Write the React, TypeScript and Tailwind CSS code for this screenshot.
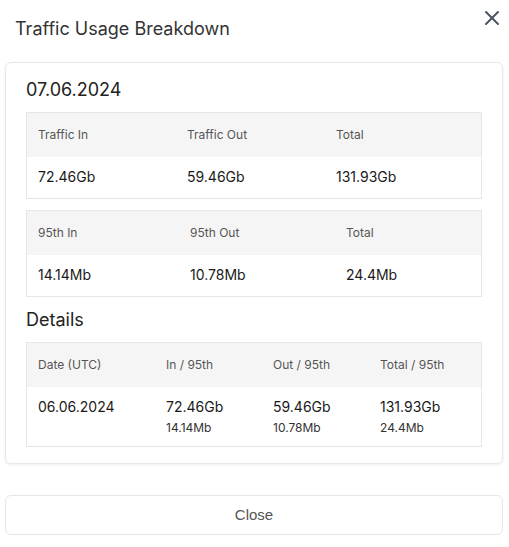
import { X } from 'lucide-react'

const font = { fontFamily: 'Inter, "Noto Sans", sans-serif' }

type Col = { label: string; value: string; sub?: string }

const Table = ({ cols, grid, bodyH }: { cols: Col[]; grid: string; bodyH: string }) => (
  <div className="border border-[#e6e6e6]">
    <div className={`grid ${grid} bg-[#f5f5f5] h-[44px] items-center`}>
      {cols.map((c) => (
        <div key={c.label} className="pl-[11px] text-[12px] text-[#555]">
          {c.label}
        </div>
      ))}
    </div>
    <div className={`grid ${grid} bg-white ${bodyH} items-start pt-[10px]`}>
      {cols.map((c) => (
        <div key={c.label} className="pl-[11px]">
          <div className="text-[14px] text-[#1a1a1a] leading-[20px]">{c.value}</div>
          {c.sub && <div className="text-[12px] text-[#333] leading-[18px] mt-[2px]">{c.sub}</div>}
        </div>
      ))}
    </div>
  </div>
)

export default function App() {
  return (
    <div className="w-[509px] h-[547px] bg-white relative" style={font}>
      <button className="absolute right-[5px] top-[6px] text-[#4b5563]">
        <X size={24} strokeWidth={2} />
      </button>
      <div className="px-[15px] pt-[17px] h-[62px]">
        <h2 className="text-[18px] leading-[24px] text-[#333]">Traffic Usage Breakdown</h2>
      </div>
      <div className="mx-[5px] w-[498px] border border-[#e8e8e8] rounded-md shadow-[0_1px_3px_rgba(0,0,0,0.08)] px-[20px] pt-[15px] pb-[16px]">
        <div className="text-[18px] leading-[24px] text-[#222] mb-[10px]">07.06.2024</div>
        <Table
          grid="grid-cols-[149px_149px_1fr]"
          bodyH="h-[41px]"
          cols={[
            { label: 'Traffic In', value: '72.46Gb' },
            { label: 'Traffic Out', value: '59.46Gb' },
            { label: 'Total', value: '131.93Gb' },
          ]}
        />
        <div className="h-[11px]" />
        <Table
          grid="grid-cols-[152px_156px_1fr]"
          bodyH="h-[41px]"
          cols={[
            { label: '95th In', value: '14.14Mb' },
            { label: '95th Out', value: '10.78Mb' },
            { label: 'Total', value: '24.4Mb' },
          ]}
        />
        <div className="text-[18px] leading-[24px] text-[#222] mt-[11px] mb-[10px]">Details</div>
        <Table
          grid="grid-cols-[128px_107px_107px_1fr]"
          bodyH="h-[59px]"
          cols={[
            { label: 'Date (UTC)', value: '06.06.2024' },
            { label: 'In / 95th', value: '72.46Gb', sub: '14.14Mb' },
            { label: 'Out / 95th', value: '59.46Gb', sub: '10.78Mb' },
            { label: 'Total / 95th', value: '131.93Gb', sub: '24.4Mb' },
          ]}
        />
      </div>
      <button
        className="mt-[31px] mx-[5px] w-[498px] h-[40px] border border-[#e6e6e6] rounded-md text-[15px] text-[#555] bg-white"
        style={{ fontFamily: '"Liberation Sans", Arial, sans-serif' }}
      >
        Close
      </button>
    </div>
  )
}
